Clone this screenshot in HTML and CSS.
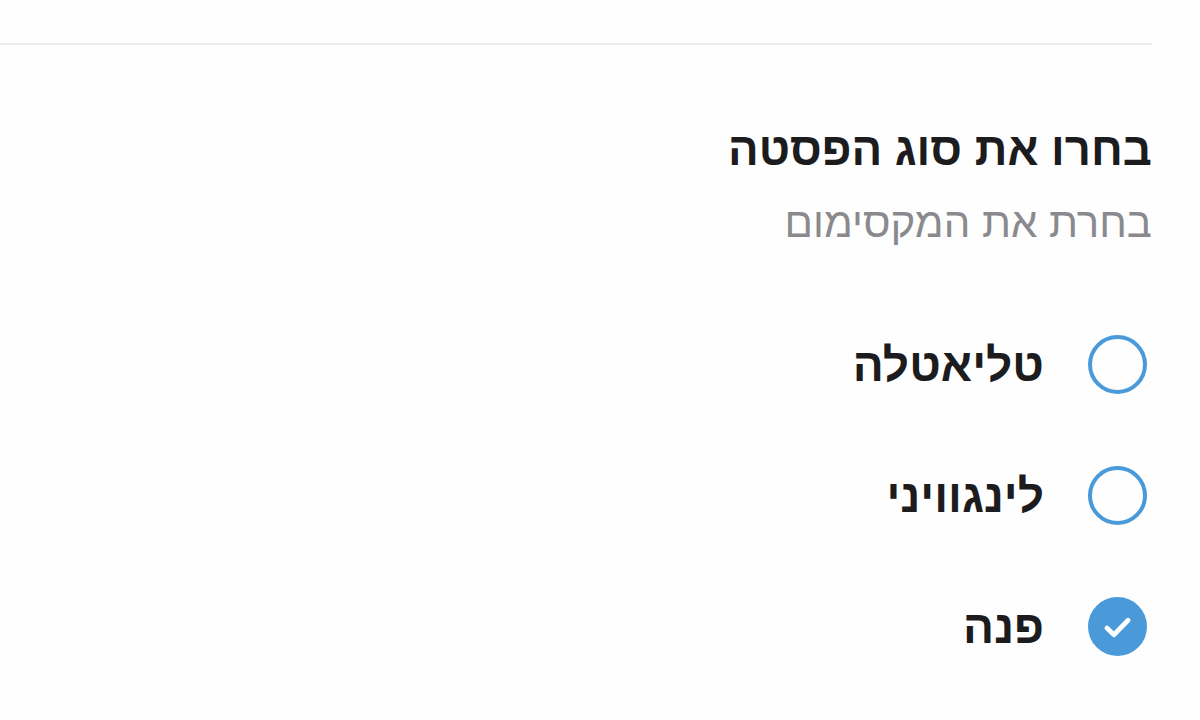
FILE: index.html
```html
<!DOCTYPE html>
<html lang="he" dir="rtl">
<head>
<meta charset="utf-8">
<link rel="stylesheet" href="styles.css">
</head>
<body>
<div class="page">
  <div class="topbar"></div>
  <h1 class="title">בחרו את סוג הפסטה</h1>
  <p class="subtitle">בחרת את המקסימום</p>
  <ul class="options">
    <li class="option">
      <span class="radio"></span>
      <span class="label">טליאטלה</span>
    </li>
    <li class="option">
      <span class="radio"></span>
      <span class="label">לינגוויני</span>
    </li>
    <li class="option">
      <span class="radio checked">
        <svg class="check" viewBox="0 0 26 22" width="29" height="25"><path d="M3.5 11.5L9.8 17.5L22.5 4.5" fill="none" stroke="#fff" stroke-width="4.2" stroke-linecap="round" stroke-linejoin="round"/></svg>
      </span>
      <span class="label">פנה</span>
    </li>
  </ul>
</div>
</body>
</html>
```
FILE: styles.css
```css
html, body {
  margin: 0;
  padding: 0;
  background: #fefefe;
}
body {
  font-family: "Liberation Sans", "DejaVu Sans", sans-serif;
  direction: rtl;
  width: 1200px;
  height: 720px;
  overflow: hidden;
}
.page {
  padding-right: 48px;
}
.topbar {
  height: 43px;
  border-bottom: 2px solid #ececee;
}
.title {
  margin: 80px 0 0;
  font-size: 45.5px;
  font-weight: bold;
  color: #1c1c1e;
  line-height: 50px;
}
.subtitle {
  margin: 24px 0 0;
  font-size: 42px;
  color: #8a8a8e;
  line-height: 48px;
}
.options {
  list-style: none;
  margin: 52px 0 0;
  padding: 0;
}
.option {
  display: flex;
  align-items: center;
  height: 131px;
}
.radio {
  box-sizing: border-box;
  width: 59px;
  height: 59px;
  border: 4.5px solid #4a9ad9;
  border-radius: 50%;
  margin-right: 5px;
  display: flex;
  align-items: center;
  justify-content: center;
}
.radio.checked {
  background: #4a9ad9;
}
.check {
  flex: none;
  margin-top: 2px;
}
.label {
  margin-right: 44px;
  font-size: 46px;
  font-weight: bold;
  color: #1c1c1e;
}
```
